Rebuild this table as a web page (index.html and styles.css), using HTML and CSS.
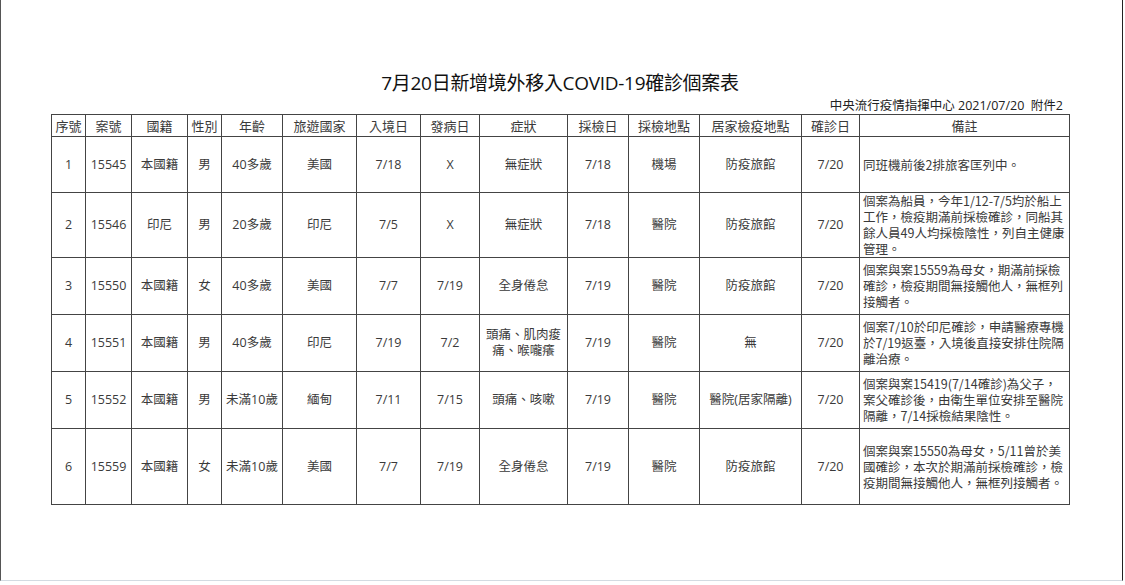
FILE: index.html
```html
<!DOCTYPE html>
<html lang="zh-TW">
<head>
<meta charset="utf-8">
<title>7月20日新增境外移入COVID-19確診個案表</title>
<link rel="stylesheet" href="styles.css">
</head>
<body>
<div class="frame">
  <div class="sheet">
    <h1 class="title">7月20日新增境外移入COVID-19確診個案表</h1>
    <div class="source">中央流行疫情指揮中心 2021/07/20&nbsp;&nbsp;附件2</div>
    <table class="cases">
      <colgroup>
        <col class="c1"><col class="c2"><col class="c3"><col class="c4"><col class="c5"><col class="c6"><col class="c7">
        <col class="c8"><col class="c9"><col class="c10"><col class="c11"><col class="c12"><col class="c13"><col class="c14">
      </colgroup>
      <thead>
        <tr class="head">
          <th>序號</th><th>案號</th><th>國籍</th><th>性別</th><th>年齡</th><th>旅遊國家</th><th>入境日</th>
          <th>發病日</th><th>症狀</th><th>採檢日</th><th>採檢地點</th><th>居家檢疫地點</th><th>確診日</th><th>備註</th>
        </tr>
      </thead>
      <tbody>
        <tr class="r1">
          <td>1</td><td>15545</td><td>本國籍</td><td>男</td><td>40多歲</td><td>美國</td><td>7/18</td>
          <td>X</td><td>無症狀</td><td>7/18</td><td>機場</td><td>防疫旅館</td><td>7/20</td>
          <td class="note">同班機前後2排旅客匡列中。</td>
        </tr>
        <tr class="r2">
          <td>2</td><td>15546</td><td>印尼</td><td>男</td><td>20多歲</td><td>印尼</td><td>7/5</td>
          <td>X</td><td>無症狀</td><td>7/18</td><td>醫院</td><td>防疫旅館</td><td>7/20</td>
          <td class="note">個案為船員，今年1/12-7/5均於船上<br>工作，檢疫期滿前採檢確診，同船其<br>餘人員49人均採檢陰性，列自主健康<br>管理。</td>
        </tr>
        <tr class="r3">
          <td>3</td><td>15550</td><td>本國籍</td><td>女</td><td>40多歲</td><td>美國</td><td>7/7</td>
          <td>7/19</td><td>全身倦怠</td><td>7/19</td><td>醫院</td><td>防疫旅館</td><td>7/20</td>
          <td class="note">個案與案15559為母女，期滿前採檢<br>確診，檢疫期間無接觸他人，無框列<br>接觸者。</td>
        </tr>
        <tr class="r4">
          <td>4</td><td>15551</td><td>本國籍</td><td>男</td><td>40多歲</td><td>印尼</td><td>7/19</td>
          <td>7/2</td><td>頭痛、肌肉痠<br>痛、喉嚨癢</td><td>7/19</td><td>醫院</td><td>無</td><td>7/20</td>
          <td class="note">個案7/10於印尼確診，申請醫療專機<br>於7/19返臺，入境後直接安排住院隔<br>離治療。</td>
        </tr>
        <tr class="r5">
          <td>5</td><td>15552</td><td>本國籍</td><td>男</td><td>未滿10歲</td><td>緬甸</td><td>7/11</td>
          <td>7/15</td><td>頭痛、咳嗽</td><td>7/19</td><td>醫院</td><td>醫院(居家隔離)</td><td>7/20</td>
          <td class="note">個案與案15419(7/14確診)為父子，<br>案父確診後，由衛生單位安排至醫院<br>隔離，7/14採檢結果陰性。</td>
        </tr>
        <tr class="r6">
          <td>6</td><td>15559</td><td>本國籍</td><td>女</td><td>未滿10歲</td><td>美國</td><td>7/7</td>
          <td>7/19</td><td>全身倦怠</td><td>7/19</td><td>醫院</td><td>防疫旅館</td><td>7/20</td>
          <td class="note">個案與案15550為母女，5/11曾於美<br>國確診，本次於期滿前採檢確診，檢<br>疫期間無接觸他人，無框列接觸者。</td>
        </tr>
      </tbody>
    </table>
  </div>
</div>
</body>
</html>
```

FILE: styles.css
```css
html, body {
  margin: 0;
  padding: 0;
  background: #ffffff;
}

body {
  font-family: "Open Sans", "Noto Sans CJK TC", sans-serif;
  color: #222;
}

.frame {
  box-sizing: border-box;
  width: 1123px;
  height: 581px;
  border-left: 1px solid #555;
  border-right: 1px solid #222;
  border-bottom: 1px solid #d3dbe2;
  overflow: hidden;
}

.sheet {
  width: 1018px;
  padding-top: 71px;
  padding-left: 50px;
}

.title {
  margin: 0;
  font-weight: 400;
  font-size: 19px;
  line-height: 24px;
  text-align: center;
  color: #111;
  letter-spacing: -0.3px;
}

.source {
  margin-top: 3px;
  height: 16px;
  font-size: 12.5px;
  line-height: 16px;
  text-align: right;
  padding-right: 6px;
  color: #222;
}

.cases {
  width: 1018px;
  table-layout: fixed;
  border-collapse: collapse;
  font-size: 12.5px;
}

.cases th,
.cases td {
  border: 1px solid #444;
  padding: 0 1px;
  text-align: center;
  vertical-align: middle;
  font-weight: 400;
  white-space: nowrap;
  line-height: 16px;
  overflow: hidden;
  color: #3a3a3a;
}

.cases th {
  color: #3a3a3a;
  font-size: 13px;
}

.cases td.note {
  text-align: left;
  padding-left: 3px;
  font-family: "Noto Sans CJK TC", "Open Sans", sans-serif;
}

.c1 { width: 34px; }
.c2 { width: 46px; }
.c3 { width: 56px; }
.c4 { width: 34px; }
.c5 { width: 61px; }
.c6 { width: 74px; }
.c7 { width: 64px; }
.c8 { width: 59px; }
.c9 { width: 88px; }
.c10 { width: 61px; }
.c11 { width: 71px; }
.c12 { width: 102px; }
.c13 { width: 58px; }
.c14 { width: 210px; }

.head { height: 22px; }
.r1 { height: 56px; }
.r2 { height: 65px; }
.r3 { height: 57px; }
.r4 { height: 57px; }
.r5 { height: 57px; }
.r6 { height: 76px; }
```
